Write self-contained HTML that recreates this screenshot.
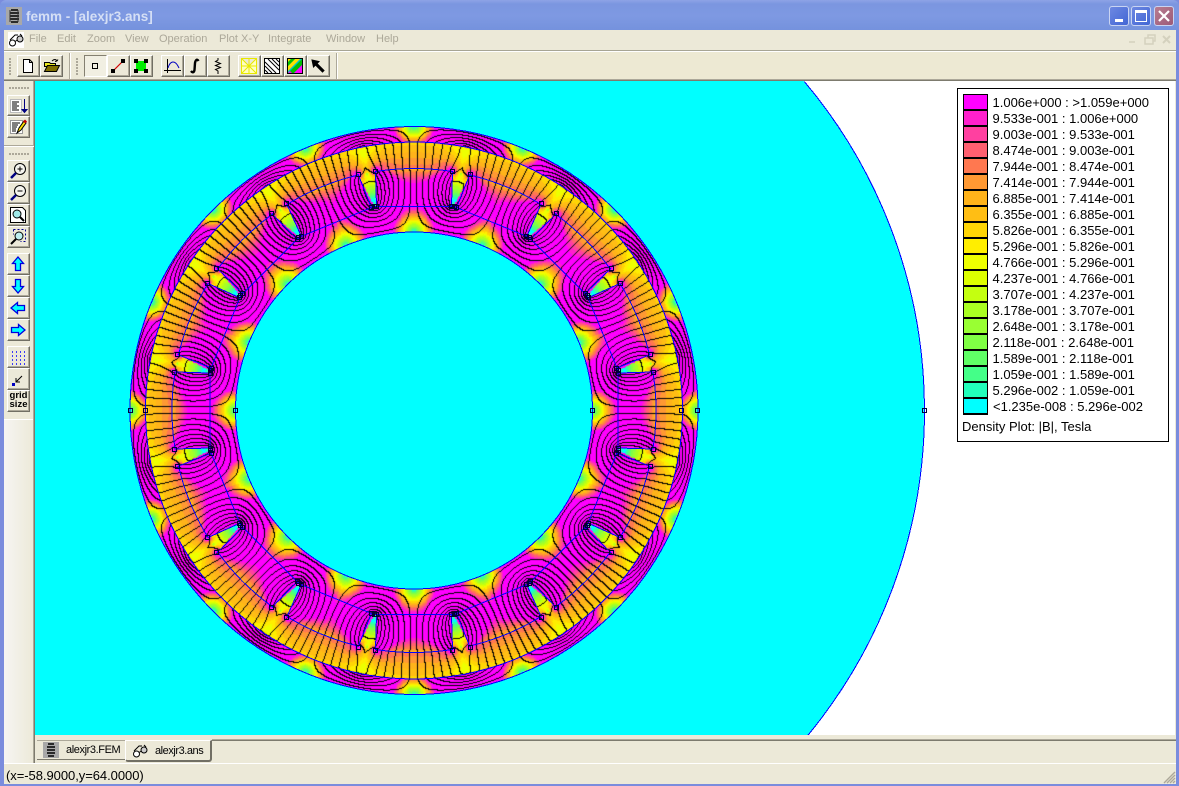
<!DOCTYPE html>
<html><head><meta charset="utf-8"><title>femm</title>
<style>
html,body{margin:0;padding:0;background:#ece9d8;width:1179px;height:786px;overflow:hidden}
#w{position:relative;width:1179px;height:786px;overflow:hidden;background:#ece9d8;font-family:"Liberation Sans",sans-serif}
#w div,#w span,#w svg,#w canvas{position:absolute}
.b{width:23px;height:22px;box-sizing:border-box;background:#ece9d8;border:1px solid;border-color:#fff #716f64 #716f64 #fff;box-shadow:inset -1px -1px 0 #aca899}
.b svg{left:2px;top:2px}
.p{border-color:#848071 #fff #fff #848071;box-shadow:none;background:#f1efe2}
.m{top:33px;font-size:11px;line-height:13px;color:#aca899;white-space:nowrap}
.s{left:963px;width:25px;height:17px;box-sizing:border-box;border:2px solid #000;border-width:1.5px 1.5px 2px 1.5px}
.t{left:992.5px;font-size:13px;line-height:16px;color:#000;white-space:nowrap}
.g{width:1px;height:1px}
.gh{height:2px;background-image:repeating-linear-gradient(90deg,#aca899 0 2px,transparent 2px 3px)}
.gv{width:2px;background-image:repeating-linear-gradient(0deg,#aca899 0 2px,transparent 2px 3px)}
.wb{top:6px;width:20px;height:20px;box-sizing:border-box;border:1px solid #c9d4f2;border-radius:3px;background:linear-gradient(135deg,#6d88e2,#4266d4)}
</style></head><body>
<div id="w">
<!-- frame -->
<div style="left:0;top:0;width:1179px;height:786px;background:#7a8cdd"></div>
<div style="left:0;top:0;width:1179px;height:30px;background:linear-gradient(180deg,#8ea3e6 0,#7b96e0 4px,#7e99e2 16px,#7592dd 30px);border-radius:6px 6px 0 0"></div>
<div style="left:4px;top:30px;width:1172px;height:754px;background:#ece9d8"></div>
<!-- title -->
<svg style="left:6px;top:7px" width="16" height="18" viewBox="0 0 16 18"><rect width="16" height="18" fill="#a8a8a8"/><path d="M5 3h7M4 6h9M4 9h9M4 12h9M5 15h7" stroke="#000" stroke-width="1.6" fill="none"/><path d="M4 3v12M12 3v12" stroke="#333" fill="none"/></svg>
<div style="left:26px;top:9px;font-size:13.5px;font-weight:bold;line-height:16px;color:#d5dff5;white-space:nowrap">femm - [alexjr3.ans]</div>
<div class="wb" style="left:1109px"><div style="left:5px;top:12px;width:8px;height:3px;background:#fff"></div></div>
<div class="wb" style="left:1131px"><div style="left:3px;top:3px;width:12px;height:12px;box-sizing:border-box;border:1px solid #fff;border-top:3px solid #fff"></div></div>
<div class="wb" style="left:1154px;background:linear-gradient(135deg,#b87c90,#9c5a78)"><svg style="left:3px;top:3px" width="12" height="12"><path d="M1 1L11 11M11 1L1 11" stroke="#fff" stroke-width="2.2"/></svg></div>
<!-- menu -->
<svg style="left:8px;top:32px" width="16" height="16" viewBox="0 0 16 16"><rect width="16" height="16" fill="#fff"/><circle cx="4.5" cy="11" r="3" fill="#fff" stroke="#000"/><circle cx="12" cy="7" r="3" fill="#ccc" stroke="#000"/><path d="M7 9.5L9.5 8M2 8L7 3h3M14 4L12 2" stroke="#000" fill="none"/></svg>
<span class="m" style="left:29px">File</span><span class="m" style="left:57px">Edit</span><span class="m" style="left:87px">Zoom</span><span class="m" style="left:125px">View</span><span class="m" style="left:159px">Operation</span><span class="m" style="left:219px">Plot X-Y</span><span class="m" style="left:268px">Integrate</span><span class="m" style="left:326px">Window</span><span class="m" style="left:376px">Help</span>
<svg style="left:1124px;top:32px" width="50" height="16"><g fill="none" stroke="#d4d1be" stroke-width="1.5"><path d="M5 10h6"/><path d="M21 6h8v6h-8zM24 6v-3h7v6h-2"/><path d="M39 4l7 7M46 4l-7 7" stroke-width="2"/></g></svg>
<div style="left:4px;top:50px;width:1172px;height:1px;background:#a7a594"></div>
<div style="left:4px;top:51px;width:1172px;height:1px;background:#fff"></div>
<div style="left:338px;top:52px;width:838px;height:28px;background:#ede9d3"></div>
<div style="left:4px;top:79px;width:1172px;height:1px;background:#aca899"></div>
<div style="left:4px;top:80px;width:1172px;height:1px;background:#7d7b6e"></div>
<!-- top toolbar -->
<div class="gv" style="left:9px;top:57px;height:18px"></div><div class="gv" style="left:76px;top:57px;height:18px"></div>
<div style="left:69px;top:53px;width:1px;height:26px;background:#aca899"></div><div style="left:70px;top:53px;width:1px;height:26px;background:#fff"></div>
<div style="left:336px;top:53px;width:1px;height:26px;background:#aca899"></div><div style="left:337px;top:53px;width:1px;height:26px;background:#fff"></div>
<div class="b" style="left:17px;top:55px"><svg width="16" height="16"><path d="M3.5 1.5h6l3 3v10h-9zM9.5 1.5v3h3" fill="#fff" stroke="#000"/></svg></div>
<div class="b" style="left:40px;top:55px"><svg width="18" height="16"><path d="M1.5 4.5h5l1 1h5v3h-11z" fill="#e8e820" stroke="#000"/><path d="M1.5 13.5l3-6h12l-3 6z" fill="#807000" stroke="#000"/><path d="M9 3c2-2 4-2 5 0M14 3l1-1.500M14 3l-2 .5" stroke="#000" fill="none"/></svg></div>
<div class="b p" style="left:84px;top:55px"><svg width="16" height="16"><rect x="5.500" y="5.500" width="5" height="5" fill="none" stroke="#000"/></svg></div>
<div class="b" style="left:107px;top:55px"><svg width="16" height="16"><path d="M3 13L13 3" stroke="#d00000" stroke-width="1.200"/><rect x="1" y="11" width="4" height="4"/><rect x="11" y="1" width="4" height="4"/></svg></div>
<div class="b" style="left:130px;top:55px"><svg width="16" height="16"><rect x="3" y="3" width="10" height="10" fill="#00ee00"/><rect x="1" y="1" width="4" height="4"/><rect x="11" y="1" width="4" height="4"/><rect x="1" y="11" width="4" height="4"/><rect x="11" y="11" width="4" height="4"/></svg></div>
<div class="b" style="left:161px;top:55px"><svg width="18" height="16"><path d="M3.500 1v14M0 12.500h17" stroke="#000" fill="none"/><path d="M4 10C6 3 11 1 15 10" stroke="#0000c0" fill="none"/></svg></div>
<div class="b" style="left:184px;top:55px"><svg width="16" height="16"><path d="M11.500 3C10 0.500 8.500 2 8 5L7.500 12C7 14.500 5.500 15 4 13" stroke="#000" stroke-width="2.400" fill="none"/></svg></div>
<div class="b" style="left:207px;top:55px"><svg width="16" height="16"><path d="M8 0v2L5.500 3.500l5 2-5 2 5 2-5 2L8 13v3" stroke="#000" fill="none"/></svg></div>
<div class="b" style="left:238px;top:55px"><svg width="16" height="16"><path d="M.5 .5h15v15H.5zM8 .5v15M.5 8h15M.5 .5l7.500 7.500 7.500-7.500M.5 15.500L8 8l7.500 7.500" fill="#ffffc0" stroke="#e8e800"/></svg></div>
<div class="b" style="left:261px;top:55px"><svg width="16" height="16"><rect x=".5" y=".5" width="15" height="15" fill="#fff" stroke="#000"/><path d="M1 4l11 11M1 8l7 7M1 12l3 3M4 1l11 11M8 1l7 7M12 1l3 3" stroke="#000"/></svg></div>
<div class="b" style="left:284px;top:55px"><svg width="16" height="16"><rect width="16" height="16" fill="#00c8c8"/><path d="M0 16V0h5L0 5zM0 9L9 0h5L0 14z" fill="#ffe000"/><path d="M0 9V5L5 0h4zM0 16l16-16v6L6 16z" fill="#00c000"/><path d="M0 16h6l-3-3z" fill="#ff00ff"/><path d="M6 16L16 6v10z" fill="#ff00ff"/><rect x=".5" y=".5" width="15" height="15" fill="none" stroke="#000"/></svg></div>
<div class="b" style="left:307px;top:55px"><svg width="16" height="16"><path d="M2 2l7 1.500-2 2 7 7-1.500 1.500-7-7-2 2z" fill="#000" stroke="#000"/></svg></div>
<!-- left toolbar -->
<div style="left:4px;top:81px;width:30px;height:338px;background:#ece9d8"></div>
<div style="left:4px;top:419px;width:30px;height:1px;background:#fff"></div>
<div style="left:4px;top:420px;width:30px;height:343px;background:linear-gradient(90deg,#f6f5f2,#ece9d8)"></div>
<div style="left:33px;top:81px;width:1px;height:682px;background:#aca899"></div>
<div style="left:34px;top:81px;width:1px;height:682px;background:#7d7b6e"></div>
<div class="gh" style="left:9px;top:87px;width:20px"></div>
<div style="left:4px;top:145px;width:30px;height:1px;background:#aca899"></div><div style="left:4px;top:146px;width:30px;height:1px;background:#fff"></div>
<div class="gh" style="left:9px;top:153px;width:20px"></div>
<div class="b" style="left:7px;top:95px;height:21px"><svg width="18" height="16"><rect x=".5" y="1.500" width="11" height="13" fill="#fff" stroke="#bbb"/><path d="M2 4h7M2 6h5M2 8h7M2 10h5M2 12h7" stroke="#000"/><path d="M14.500 1v13M12 11.500l2.500 3 2.500-3z" stroke="#000080" fill="#000080"/></svg></div>
<div class="b" style="left:7px;top:116px;height:22px"><svg width="18" height="16"><rect x=".5" y="1.500" width="12" height="13" fill="#fff" stroke="#999"/><path d="M2 4h8M2 6h6M2 8h5M2 10h4M2 12h4" stroke="#000"/><path d="M7 14l2-5 5-7 2 2-5 7z" fill="#ffe000" stroke="#000"/><path d="M13 2.500l2-2 2 2-1.500 2z" fill="#c00000"/></svg></div>
<div class="b" style="left:7px;top:160px"><svg width="16" height="16" fill="none"><circle cx="10" cy="6" r="5.500" fill="#f4f4ee" stroke="#000"/><path d="M6 10L1 15" stroke="#000080" stroke-width="2.500"/><path d="M7.500 6h5M10 3.500v5" stroke="#000"/></svg></div>
<div class="b" style="left:7px;top:182px"><svg width="16" height="16" fill="none"><circle cx="10" cy="6" r="5.500" fill="#f4f4ee" stroke="#000"/><path d="M6 10L1 15" stroke="#000080" stroke-width="2.500"/><path d="M7.500 6h5" stroke="#000"/></svg></div>
<div class="b" style="left:7px;top:204px"><svg width="16" height="16" fill="none"><path d="M.5 .5h12l3 3v12H.5z" fill="#fff" stroke="#000"/><circle cx="7" cy="7" r="4" fill="#9fe8e8" stroke="#000"/><path d="M10 10l4 4" stroke="#000" stroke-width="2"/></svg></div>
<div class="b" style="left:7px;top:226px"><svg width="16" height="16" fill="none"><path d="M3.500 .5h12v12" stroke="#00008b" stroke-dasharray="2 2"/><path d="M3.500 .5v5M15.500 12.500h-5" stroke="#00008b" stroke-dasharray="2 2"/><circle cx="9" cy="7" r="4" fill="#bff0f0" stroke="#000"/><path d="M6 10l-5 5" stroke="#000" stroke-width="2"/></svg></div>
<div class="b" style="left:7px;top:253px"><svg width="16" height="16"><path d="M8 1l5.500 6.500H10.500v7h-5v-7H2.500z" fill="#00ffff" stroke="#0000e0" stroke-width="1.300"/></svg></div>
<div class="b" style="left:7px;top:275px"><svg width="16" height="16"><path d="M8 1l5.500 6.500H10.500v7h-5v-7H2.500z" transform="rotate(180 8 8)" fill="#00ffff" stroke="#0000e0" stroke-width="1.300"/></svg></div>
<div class="b" style="left:7px;top:297px"><svg width="16" height="16"><path d="M8 1l5.500 6.500H10.500v7h-5v-7H2.500z" transform="rotate(-90 8 8)" fill="#00ffff" stroke="#0000e0" stroke-width="1.300"/></svg></div>
<div class="b" style="left:7px;top:319px"><svg width="16" height="16"><path d="M8 1l5.500 6.500H10.500v7h-5v-7H2.500z" transform="rotate(90 8 8)" fill="#00ffff" stroke="#0000e0" stroke-width="1.300"/></svg></div>
<div class="b" style="left:7px;top:346px"><svg width="16" height="16"><path d="M2 3h1M6 3h1M10 3h1M14 3h1M2 7h1M6 7h1M10 7h1M14 7h1M2 11h1M6 11h1M10 11h1M14 11h1M2 15h1M6 15h1M10 15h1M14 15h1" stroke="#0000ff" stroke-width="1.500"/></svg></div>
<div class="b" style="left:7px;top:368px"><svg width="16" height="16"><rect x="2" y="12" width="3" height="3" fill="#0000c0"/><path d="M6 11L12 5M6 7v4h4" stroke="#000" fill="none"/></svg></div>
<div class="b" style="left:7px;top:390px"><span style="left:0;top:1px;width:21px;text-align:center;font-size:9.500px;line-height:8.500px;font-weight:bold;color:#000">grid<br>size</span></div>
<!-- view -->
<canvas id="c" width="1140" height="654" style="left:35px;top:81px"></canvas>
<svg id="o" style="left:35px;top:81px" width="1140" height="654" viewBox="35 81 1140 654"></svg>
<!-- legend -->
<div style="left:957px;top:88px;width:212px;height:354px;box-sizing:border-box;background:#fff;border:1px solid #000"></div>
<div class="s" style="top:94px;background:#ff00ff"></div><div class="t" style="top:95px">1.006e+000 : &gt;1.059e+000</div>
<div class="s" style="top:110px;background:#ff20cc"></div><div class="t" style="top:111px">9.533e-001 : 1.006e+000</div>
<div class="s" style="top:126px;background:#ff40a0"></div><div class="t" style="top:127px">9.003e-001 : 9.533e-001</div>
<div class="s" style="top:142px;background:#ff6070"></div><div class="t" style="top:143px">8.474e-001 : 9.003e-001</div>
<div class="s" style="top:158px;background:#ff7850"></div><div class="t" style="top:159px">7.944e-001 : 8.474e-001</div>
<div class="s" style="top:174px;background:#ff9933"></div><div class="t" style="top:175px">7.414e-001 : 7.944e-001</div>
<div class="s" style="top:190px;background:#ffb31a"></div><div class="t" style="top:191px">6.885e-001 : 7.414e-001</div>
<div class="s" style="top:206px;background:#ffbe14"></div><div class="t" style="top:207px">6.355e-001 : 6.885e-001</div>
<div class="s" style="top:222px;background:#ffd505"></div><div class="t" style="top:223px">5.826e-001 : 6.355e-001</div>
<div class="s" style="top:238px;background:#ffee00"></div><div class="t" style="top:239px">5.296e-001 : 5.826e-001</div>
<div class="s" style="top:254px;background:#eeff00"></div><div class="t" style="top:255px">4.766e-001 : 5.296e-001</div>
<div class="s" style="top:270px;background:#ddff00"></div><div class="t" style="top:271px">4.237e-001 : 4.766e-001</div>
<div class="s" style="top:286px;background:#c4ff10"></div><div class="t" style="top:287px">3.707e-001 : 4.237e-001</div>
<div class="s" style="top:302px;background:#aaff22"></div><div class="t" style="top:303px">3.178e-001 : 3.707e-001</div>
<div class="s" style="top:318px;background:#99ff33"></div><div class="t" style="top:319px">2.648e-001 : 3.178e-001</div>
<div class="s" style="top:334px;background:#80ff44"></div><div class="t" style="top:335px">2.118e-001 : 2.648e-001</div>
<div class="s" style="top:350px;background:#60ff66"></div><div class="t" style="top:351px">1.589e-001 : 2.118e-001</div>
<div class="s" style="top:366px;background:#44ff88"></div><div class="t" style="top:367px">1.059e-001 : 1.589e-001</div>
<div class="s" style="top:382px;background:#22ffbb"></div><div class="t" style="top:383px">5.296e-002 : 1.059e-001</div>
<div class="s" style="top:398px;background:#00ffff"></div><div class="t" style="top:399px;left:993px">&lt;1.235e-008 : 5.296e-002</div>
<div style="left:962px;top:419px;font-size:13px;line-height:16px;color:#000;white-space:nowrap">Density Plot: |B|, Tesla</div>
<!-- tabs -->
<div style="left:212px;top:739px;width:964px;height:1px;background:#aca899"></div>
<div style="left:212px;top:740px;width:964px;height:1px;background:#7d7b6e"></div>
<div style="left:37px;top:740px;width:88px;height:20px;box-sizing:border-box;border-bottom:1px solid #7d7b6e;border-top:1px solid #aca899;background:#ece9d8"></div>
<div style="left:125px;top:740px;width:87px;height:22px;box-sizing:border-box;background:#ece9d8;border:1px solid #fff;border-right:2px solid #716f64;border-bottom:2px solid #716f64;border-radius:0 0 3px 3px"></div>
<svg style="left:43px;top:742px" width="16" height="16"><rect width="16" height="16" fill="#a8a8a8"/><path d="M5 2h6M4 5h8M4 8h8M4 11h8M5 14h6" stroke="#000" stroke-width="1.400"/></svg>
<span style="left:66px;top:744px;font-size:11px;line-height:13px;letter-spacing:-.4px;color:#000;white-space:nowrap">alexjr3.FEM</span>
<svg style="left:132px;top:743px" width="16" height="16"><circle cx="4.500" cy="11" r="3" fill="#fff" stroke="#000"/><circle cx="12" cy="7" r="3" fill="#ccc" stroke="#000"/><path d="M7 9.500L9.500 8M2 8L7 3h3M14 4L12 2" stroke="#000" fill="none"/></svg>
<span style="left:155px;top:745px;font-size:11px;line-height:13px;letter-spacing:-.45px;color:#000;white-space:nowrap">alexjr3.ans</span>
<!-- status -->
<div style="left:4px;top:763px;width:1172px;height:1px;background:#fff"></div>
<span style="left:6px;top:768px;font-size:13px;line-height:15px;letter-spacing:-.05px;color:#000;white-space:nowrap">(x=-58.9000,y=64.0000)</span>
<svg style="left:1163px;top:769px" width="13" height="15"><path d="M12 3L1 14M12 6L4 14M12 9L7 14M12 12L10 14" stroke="#aca899" stroke-width="1.400"/></svg>
</div>
<script>
(function(){
var cx=413.5,cy=410,R0=178.5,R1=284,Rg=242,Rm=268.5;
var Nr=106,Nt=90,dr=(R1-R0)/Nr,span=22.5*Math.PI/180,dt=span/Nt,mu=60,M=0.43,Jc=0.035,d=4.7;
var slot=[[204,37.5],[239.5,38.5],[242,39],[238.5,57],[236.5,56],[202.7,42.5]];
function inSlot(x,y){var n=slot.length;for(var i=0;i<n;i++){var a=slot[i],b=slot[(i+1)%n];
 if((b[0]-a[0])*(y-a[1])-(b[1]-a[1])*(x-a[0])<0)return false;}return true;}
function boost(r){if(r>=Rm)return 1.5;var t=(Rg-r)/37;t=t>1?1:t;return 1.1+.55*t;}
function airBoost(r){if(r<=Rg)return 1.25;return 1.28-.2*(r-Rg)/(Rm-Rg);}
var W=Nt+1,nu=new Float64Array((Nr+1)*W),A=new Float64Array((Nr+1)*W),i,j;
for(i=0;i<Nr;i++)for(j=0;j<Nt;j++){var rc=R0+(i+.5)*dr,tc=(j+.5)*dt,v=1/mu;
 if(rc>Rg&&rc<Rm)v=1;else if(rc<=Rg&&inSlot(rc*Math.cos(tc),rc*Math.sin(tc)))v=1;
 nu[i*W+j]=v;}
var ae=new Float64Array(A.length),aw=new Float64Array(A.length),an=new Float64Array(A.length),as=new Float64Array(A.length),S=new Float64Array(A.length);
for(i=1;i<Nr;i++){var r=R0+i*dr;for(j=1;j<Nt;j++){var k=i*W+j;
 ae[k]=(r+dr/2)/(r*dr*dr)*(nu[k]+nu[k-1])/2;
 aw[k]=(r-dr/2)/(r*dr*dr)*(nu[k-W]+nu[k-W-1])/2;
 an[k]=1/(r*r*dt*dt)*(nu[k]+nu[k-W])/2;
 as[k]=1/(r*r*dt*dt)*(nu[k-1]+nu[k-W-1])/2;
 if(j==45&&r>Rg&&r<Rm)S[k]=2*M/(r*dt);
 var tn=j*dt;if(r<Rg&&inSlot(r*Math.cos(tn),r*Math.sin(tn)))S[k]+=Jc;}}
var om=1.94;
for(var it=0;it<6000;it++){for(i=1;i<Nr;i++)for(j=1;j<Nt;j++){var k=i*W+j,s=ae[k]+aw[k]+an[k]+as[k];
 var nv=(ae[k]*A[k+W]+aw[k]*A[k-W]+an[k]*A[k+1]+as[k]*A[k-1]+S[k])/s;
 A[k]+=om*(nv-A[k]);}}
var Bm=new Float64Array(A.length);
for(i=0;i<Nr;i++)for(j=0;j<Nt;j++){var k=i*W+j,r=R0+(i+.5)*dr;
 var da=(A[k+W]+A[k+W+1]-A[k]-A[k+1])/(2*dr),db=(A[k+1]+A[k+W+1]-A[k]-A[k+W])/(2*dt)/r;
 Bm[k]=Math.sqrt(da*da+db*db)*(nu[k]<1?boost(r):airBoost(r));}
var pal=[[255,0,255],[255,32,204],[255,64,160],[255,96,112],[255,120,80],[255,153,51],[255,179,26],[255,190,20],[255,213,5],[255,238,0],[238,255,0],[221,255,0],[196,255,16],[170,255,34],[153,255,51],[128,255,68],[96,255,102],[68,255,136],[34,255,187],[0,255,255]];
var c=document.getElementById('c'),g=c.getContext('2d'),im=g.createImageData(1140,654),D=im.data;
var CW=1141,CH=655,Av=new Float64Array(CW*CH),Ins=new Uint8Array(CW*CH);
for(var y=0;y<CH;y++)for(var x=0;x<CW;x++){
 var dx=35+x-cx,dy=81+y-cy,r=Math.sqrt(dx*dx+dy*dy),q=y*CW+x;
 if(r>=R0&&r<=R1){
  var al=Math.atan2(Math.abs(dy),Math.abs(dx))*180/Math.PI;
  var kk=Math.min(3,Math.floor(al/22.5));
  var f=al>45?90-al:al,se=f>=22.5?f-22.5:f;
  var sg=(kk%2?-1:1)*(dx<0?-1:1)*(dy<0?-1:1);
  var ft=se/22.5*Nt,fr=(r-R0)/dr;
  var ti=Math.min(Nt-1,Math.floor(ft)),ri=Math.min(Nr-1,Math.floor(fr));
  var u=ft-ti,w=fr-ri,kq=ri*W+ti;
  Av[q]=sg*((1-u)*(1-w)*A[kq]+u*(1-w)*A[kq+1]+(1-u)*w*A[kq+W]+u*w*A[kq+W+1]);
  Ins[q]=1;
  if(x<1140&&y<654){var b=Bm[kq],idx=Math.floor(b/0.05296);idx=idx>19?0:19-idx;
   var cc=pal[idx],p=(y*1140+x)*4;D[p]=cc[0];D[p+1]=cc[1];D[p+2]=cc[2];D[p+3]=255;}
 } else if(x<1140&&y<654){var p=(y*1140+x)*4,o=r<510.5;D[p]=o?0:255;D[p+1]=255;D[p+2]=255;D[p+3]=255;}
}
for(var y=0;y<654;y++)for(var x=0;x<1140;x++){var q=y*CW+x;if(!Ins[q])continue;
 var b0=Math.floor(Av[q]/d+.5);
 if((Ins[q+1]&&Math.floor(Av[q+1]/d+.5)!=b0)||(Ins[q+CW]&&Math.floor(Av[q+CW]/d+.5)!=b0)){var p=(y*1140+x)*4;D[p]=0;D[p+1]=0;D[p+2]=0;}}
g.putImageData(im,0,0);
// overlay
function sc(px,py,ks,qx,qy){var r=Math.sqrt(px*px+py*py),a=Math.atan2(py,px)*180/Math.PI,al=ks<2?a+ks*22.5:90-(a+(3-ks)*22.5);al*=Math.PI/180;return [cx+qx*r*Math.cos(al),cy+qy*r*Math.sin(al)];}
var h='<g transform="translate(.5,.5)" shape-rendering="crispEdges" fill="none" stroke="#0000ff" stroke-width="1">';
[284,268.5,178.5].forEach(function(r){h+='<circle cx="'+cx+'" cy="'+cy+'" r="'+r+'"/>';});
var yT=81,yB=735,xT=cx+Math.sqrt(510.5*510.5-(cy-yT)*(cy-yT)),xB=cx+Math.sqrt(510.5*510.5-(yB-cy)*(yB-cy));
h+='<path d="M'+xT.toFixed(1)+' '+yT+'A510.5 510.5 0 0 1 '+xB.toFixed(1)+' '+yB+'"/>';
var qs=[[-1,-1],[1,-1],[1,1],[-1,1]],nodes=[],tips=[];
var a1=Math.atan2(38.5,239.5)*180/Math.PI,a2=Math.atan2(56,236.5)*180/Math.PI;
qs.forEach(function(Q,qi){
 var gaps=[[a1,a2],[a1+22.5,a2+22.5],[90-a2-22.5,90-a1-22.5],[90-a2,90-a1]],st=0;
 gaps.concat([[90,90]]).forEach(function(G){var pts=[];for(var a=st;a<G[0];a+=1.5)pts.push(a);pts.push(G[0]);
  h+='<polyline points="'+pts.map(function(a){var t=a*Math.PI/180;return (cx+Q[0]*Rg*Math.cos(t)).toFixed(1)+','+(cy+Q[1]*Rg*Math.sin(t)).toFixed(1);}).join(' ')+'"/>';st=G[1];});
 for(var ks=0;ks<4;ks++){
  var p1=sc(204,37.5,ks,Q[0],Q[1]),c1=sc(239.5,38.5,ks,Q[0],Q[1]),c2=sc(236.5,56,ks,Q[0],Q[1]),p2=sc(202.7,42.5,ks,Q[0],Q[1]),tm=sc(204,40,ks,Q[0],Q[1]);
  h+='<path d="M'+p1+'L'+c1+'M'+p2+'L'+c2+'"/>';
  nodes.push(p1,c1,c2,p2,tm);
  var at=Math.atan2(tm[1]-cy,tm[0]-cx);tips.push([at,tm]);
 }
});
tips.sort(function(a,b){return a[0]-b[0]});
h+='<polygon points="'+tips.map(function(t){return t[1][0].toFixed(1)+','+t[1][1].toFixed(1)}).join(' ')+'"/>';
h+='</g><g shape-rendering="crispEdges" fill="none" stroke="#000038" stroke-width="1" transform="translate(.5,.5)">';
[[130,410],[145,410],[235,410],[592,410],[681,410],[697,410],[924,410]].forEach(function(n){nodes.push(n)});
nodes.forEach(function(n){h+='<rect x="'+(Math.round(n[0])-2)+'" y="'+(Math.round(n[1])-2)+'" width="4" height="4"/>';});
h+='</g>';
document.getElementById('o').innerHTML=h;
})();
</script>
</body></html>
